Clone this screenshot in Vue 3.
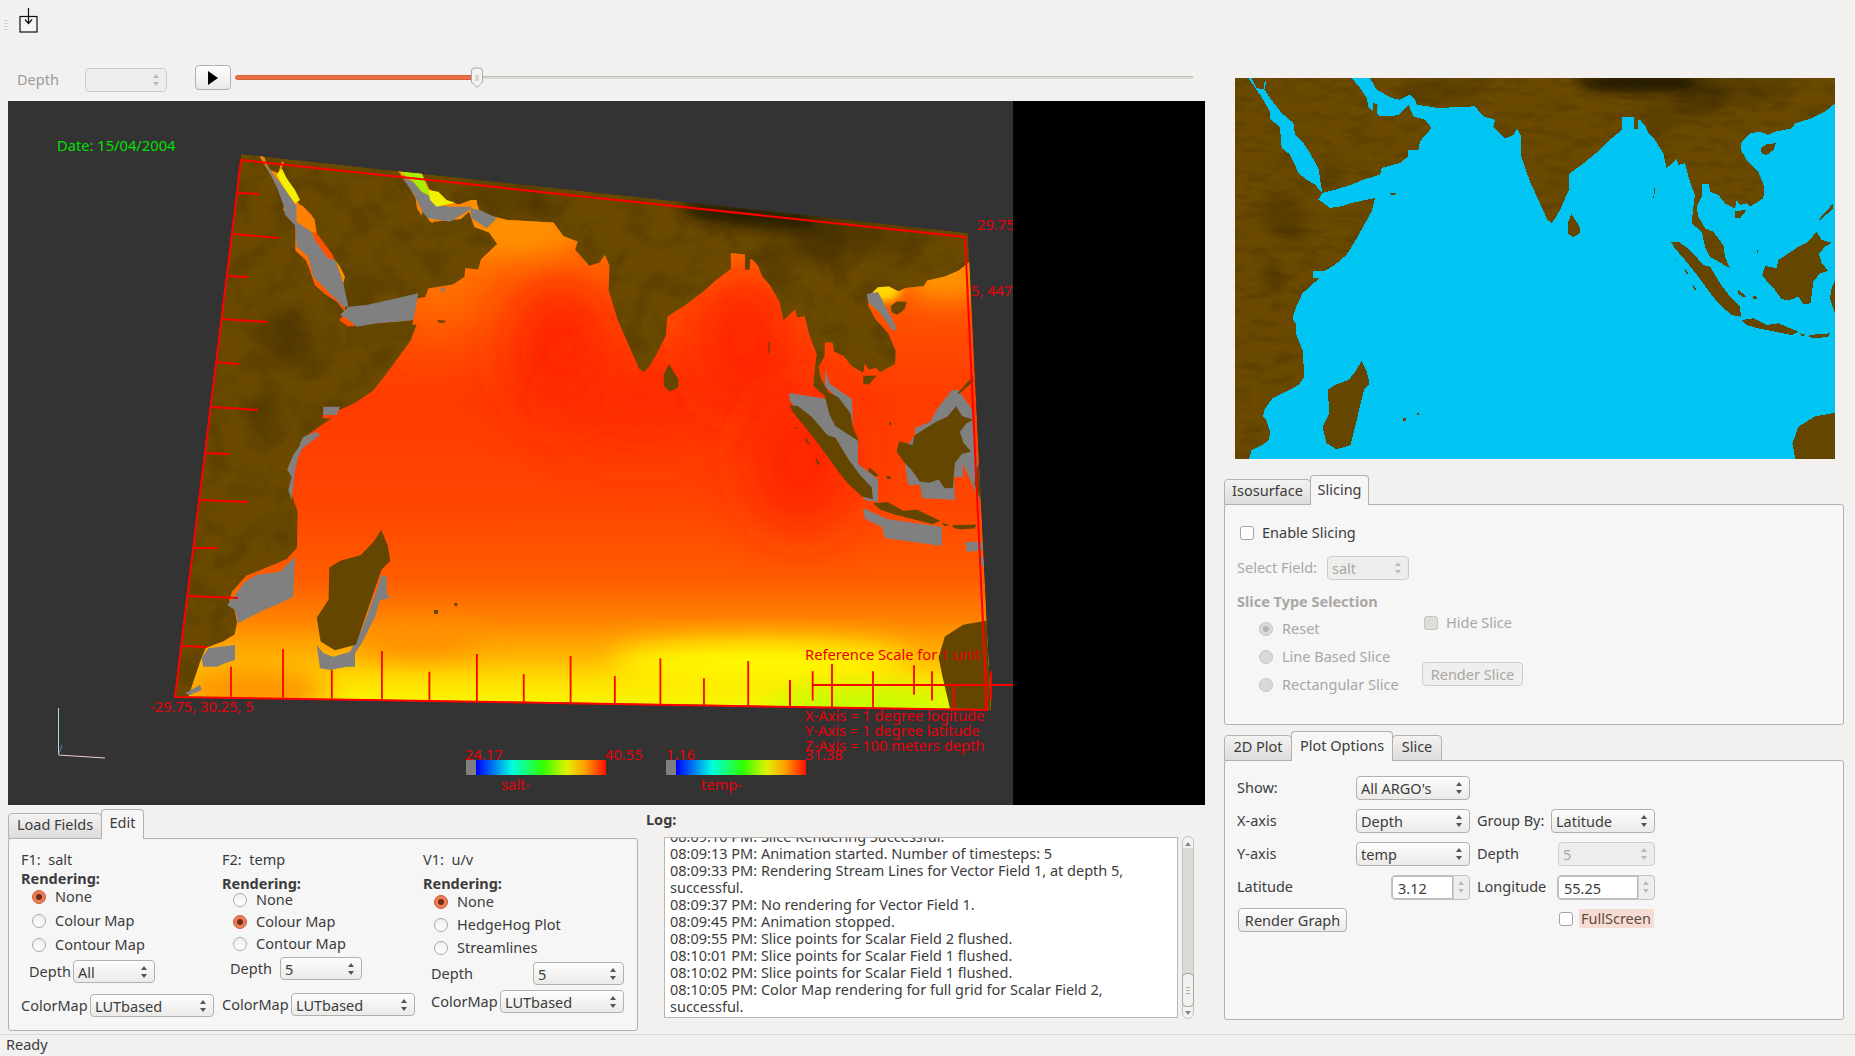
<script setup>
const parse = s => s.trim().split(/\s+/).map(p => p.split(",").map(Number))
const cv = (s, k, ox, oy, ky = k) => parse(s).map(([x, y]) => `${(ox + x * k).toFixed(1)},${(oy + y * ky).toFixed(1)}`).join(" ")
// tracing helpers: map crops -> map coordinates, scene crops -> scene coordinates
const A = s => cv(s, .83, 37, 24, 1)
const B = s => cv(s, .83, 1033, 90, 1)
const C3 = s => cv(s, 1 / 3, 180, 150)
const C4 = s => cv(s, 1 / 3, 170, 440)

const sea = [
  "60,1240 72,1167 78,1140 105,1125 122,1110 124,1085 115,1050 107,1040 110,1020 130,985 155,970 195,945 210,920 205,840 188,790 190,765 180,745 188,715 205,670 232,640 248,624",
  A("235,600 235,580 270,578 300,560 335,530 360,490 385,445 410,400 420,360 350,375 320,385 285,390 265,375 250,365 262,345 240,320 215,305 190,285 175,250 165,230 140,210 135,150 105,120 105,100 75,50 40,0 50,0 65,30 85,35 90,8 95,8 88,35 105,60 140,105 175,135 180,170 205,195 225,225 250,270 262,345 300,335 350,320 385,305 435,290 440,270 495,255 520,235 520,215 550,215 555,190 590,150 570,125 535,115 520,80 490,112 435,115 425,105 428,80 415,75 412,100 400,85 395,60 375,30 350,0 405,0 425,35 470,60 495,65 525,50 540,65 545,80 610,90 720,85 745,115 780,125"),
  "680,170 710,205 730,195 740,175 750,200 750,260 770,330 800,410 815,450 825,458 835,445 850,410 868,360 870,310 905,280 940,245 970,210 1000,180 1000,140 1030,140 1030,178 1040,178",
  B("10,60 15,60 30,75 40,100 60,120 85,160 95,205 105,195 125,175 130,195 150,190 160,230 170,260 180,285 175,320 170,370 200,395 210,440 225,470 285,505 270,470 265,435 235,395 210,385 190,350 185,320 200,290 202,252 222,252 225,275 250,285 270,310 300,325 305,300 315,315 335,310 345,320 385,295 388,260 370,215 335,180 318,150 320,125 345,100 375,95 400,105 420,95 470,85 480,70 530,55 570,35 600,10 600,0"),
  "1531,1240"
].join(" ")
const islands = [
  "875,432 895,470 895,490 878,502 866,490 865,460",
  "352,872 365,905 372,940 358,960 350,1000 325,1125 290,1138 265,1120 255,1070 272,1030 268,960 285,945 320,930 340,900",
  B("378,145 395,132 422,130 415,150 395,165 380,160"),
  B("108,425 130,425 165,450 205,495 225,500 255,550 285,590 315,620 318,650 290,645 255,615 230,585 190,530 150,480 120,445"),
  B("318,660 355,655 395,675 430,670 490,695 470,705 420,695 370,685 335,675"),
  B("495,700 515,705 500,708"),
  B("520,705 585,700 580,710 540,715 525,712"),
  B("545,395 560,420 590,428 570,440 552,462 560,490 580,512 555,520 535,545 527,610 505,612 490,590 465,600 440,598 420,570 400,550 382,525 390,498 425,505 430,480 490,440 520,425"),
  B("600,540 590,565 585,595 600,640"),
  B("595,310 550,360 555,361 595,325"),
  B("300,333 335,330 315,355 300,355"),
  B("150,505 160,520 155,522 148,510"),
  B("175,555 185,570 180,572 173,560"),
  B("118,478 130,483 126,485"),
  B("310,570 335,590 325,592 308,580"),
  B("355,588 365,590 365,597 355,597"),
  B("365,450 370,450 370,458 365,458"),
  B("57,265 61,265 57,295 55,295"),
  "1531,1028 1480,1040 1440,1070 1425,1120 1432,1167 1445,1240 1531,1240",
  A("465,345 485,345 480,351 468,351"),
  "454,1045 462,1045 462,1054 456,1054",
  "490,1028 495,1028 495,1035 490,1035"
]
const peninsula = B("170,345 185,345 210,385 235,395 265,435 270,470 285,505 225,470 210,440 200,395")
const darks = [
  [1040,38,150,32,.85],[1190,80,70,65,.3],[1300,60,120,45,.2],[150,430,50,60,.22],[185,490,40,30,.2],
  [130,620,24,50,.25],[550,60,100,35,.18],[1090,150,40,60,.18],[275,310,25,45,.18],[310,1060,18,50,.12]
]
const homography = (p0, p1, p2, p3) => {
  const dx1 = p1[0]-p2[0], dx2 = p3[0]-p2[0], dx3 = p0[0]-p1[0]+p2[0]-p3[0]
  const dy1 = p1[1]-p2[1], dy2 = p3[1]-p2[1], dy3 = p0[1]-p1[1]+p2[1]-p3[1]
  const den = dx1*dy2-dx2*dy1
  const g = (dx3*dy2-dx2*dy3)/den, h = (dx1*dy3-dx3*dy1)/den
  const a = p1[0]-p0[0]+g*p1[0], b = p3[0]-p0[0]+h*p3[0]
  const d = p1[1]-p0[1]+g*p1[1], e = p3[1]-p0[1]+h*p3[1]
  return ([x, y]) => {
    const u = (x-37)/1494
    let v = (y-24)/1143
    v -= Math.max(0, v-.25)*.08 // the 3D view shows more of the south than the flat map
    const w = g*u+h*v+1
    return [((a*u+b*v+p0[0])/w).toFixed(1), ((d*u+e*v+p0[1])/w).toFixed(1)]
  }
}
const H = homography([241,154],[968,233],[991,710],[174,697])
const warp = s => parse(s).map(H).map(p => p.join(",")).join(" ")
const ell = ([cx,cy,rx,ry]) => Array.from({length:28},(_,i)=>{const t=i/28*Math.PI*2;return `${(cx+rx*Math.cos(t)).toFixed(0)},${(cy+ry*Math.sin(t)).toFixed(0)}`}).join(" ")
const darkShapes = darks.map(d => ({ pts: ell(d), w: warp(ell(d)), op: d[4] }))
const seaW = warp(sea)
const islandsW = [...islands, peninsula].map(warp)
const quad = "241,154 968,233 991,710 174,697"

const heat = [
  [560,350,50,70,"#ff2200"],[640,400,80,45,"#ff2c00"],[745,340,50,70,"#ff2400"],[800,460,50,70,"#ff2000"],
  [505,235,70,20,"#ff9400"],[440,280,45,40,"#ff7a00"],
  [945,278,40,22,"#ff9a00"],[883,290,18,12,"#ffd800"],[250,690,80,24,"#ff9000"],[420,640,60,14,"#ff8c00"],
  [760,662,150,20,"#ffff00"],[860,704,90,14,"#b4ff00"],[960,700,30,12,"#d4ff00"]
]
const landPatches = [C3("500,530 590,520 700,510 690,570 500,590"), C3("760,215 870,205 880,240 760,260")]
const gray = [
  C3("245,20 265,60 290,110 312,170 315,195 345,225 350,290 385,320 400,380 420,400 460,440 490,470 505,470 490,400 480,370 465,330 445,325 405,270 395,245 350,215 350,170 310,110 285,80 255,35"),
  C3("480,495 505,470 560,465 650,445 715,430 700,510 650,515 590,520 530,530 500,505"),
  C3("665,80 700,130 715,160 730,190 745,205 810,215 860,185 870,175 875,205 920,235 950,205 900,180 870,170 810,170 770,165 745,135 725,125 700,95"),
  C3("430,770 480,770 470,795 430,795"),
  C3("370,860 410,845 420,855 380,885 360,900 360,880"),
  C3("780,412 795,418 798,426 785,422"),
  C4("400,0 410,0 385,50 375,90 365,180 355,150 365,110 352,90 370,45"),
  C4("375,350 370,470 330,490 270,515 205,550 195,510 172,495 225,425 260,405 330,395"),
  C4("195,615 195,660 165,670 140,680 100,680 95,655 115,625"),
  C4("635,405 650,410 650,460 660,475 630,480 615,530 595,570 575,610 555,640 555,680 530,680 480,690 450,685 440,615 460,640 490,650 540,635 575,570 620,450"),
  C4("45,760 90,735 95,750 60,765"),
  "867,294 878,292 893,321 897,329 893,331 880,313 868,302",
  "789,393 828,399 832,418 858,439 858,464 878,479 878,502 865,500 857,489 840,472 817,435 790,401",
  "825,369 830,384 852,399 853,426 840,401 825,386",
  "863,508 887,519 942,527 942,546 885,538 882,527 865,519",
  "915,428 930,422 937,409 952,390 958,390 972,409 977,460 980,502 963,464 963,477 954,477 955,500 922,498 920,485 908,485 905,464 902,453 915,435",
  "965,542 982,542 983,550 967,552",
  "978,557 983,557 984,566 980,566"
]
const paint = [
  [C3("290,75 305,55 320,85 345,120 360,150 345,160 310,110"), "#f4f000"],
  [C3("350,170 365,165 395,195 405,215 410,250 395,245 350,215"), "#ff8000"],
  [C3("395,245 410,250 440,290 455,310 465,330 445,325 405,270"), "#ff5000"],
  [C3("465,330 480,350 495,380 490,400 480,370"), "#ff9000"],
  [C3("660,65 725,70 745,120 760,125 770,160 745,135 725,125 700,95"), "#a8f000"],
  [C3("745,120 775,125 800,150 825,158 770,170 750,150"), "#f0f000"],
  [C3("870,150 890,150 895,180 875,175"), "#ff9000"]
]
const leftTicks = [[237,193,259,194],[234,234,279,238],[227,276,248,277],[222,319,268,322],[216,362,239,364],[211,407,258,410],[205,453,229,454],[199,500,248,502],[193,548,217,548],[188,596,238,598],[181,646,207,647]]
const bottomTicks = [[355,200,290],[435,148,293],[510,210,296],[587,153,298],[660,215,300],[733,162,304],[805,222,307],[877,168,310],[945,228,312],[1015,175,314],[1082,235,317],[1150,183,320],[1214,240,322]]
  .map(([x,a,b])=>({x:x/1.537,y1:600+a/3,y2:600+b/3}))
const scaleTicks = [[188,1262,1332],[246,1245,1350],[369,1262,1350],[492,1248,1318],[546,1262,1332],[612,1295,1350],[708,1262,1350],[723,1262,1332],[120,1285,1346]]
  .map(([x,a,b])=>({x:750+x/3,y1:140+a/2.376,y2:140+b/2.376}))
const log = [
  "08:09:10 PM: Slice Rendering Successful.",
  "08:09:13 PM: Animation started. Number of timesteps: 5",
  "08:09:33 PM: Rendering Stream Lines for Vector Field 1, at depth 5,",
  "successful.",
  "08:09:37 PM: No rendering for Vector Field 1.",
  "08:09:45 PM: Animation stopped.",
  "08:09:55 PM: Slice points for Scalar Field 2 flushed.",
  "08:10:01 PM: Slice points for Scalar Field 1 flushed.",
  "08:10:02 PM: Slice points for Scalar Field 1 flushed.",
  "08:10:05 PM: Color Map rendering for full grid for Scalar Field 2,",
  "successful."
]
</script>

<template>
  <div class="app">
    <div class="toolbar">
      <span class="grip"></span>
      <svg class="save" width="20" height="26" viewBox="0 0 20 26">
        <rect x="1" y="8.5" width="17" height="15.5" fill="#f6f6f5" stroke="#111" stroke-width="1.2"/>
        <path d="M9.5 0V15.500M6 11.500l3.500 4 3.500-4" fill="none" stroke="#111" stroke-width="1.2"/>
      </svg>
    </div>

    <div class="content">
      <div class="left">
        <div class="depthrow">
          <span class="depthlabel">Depth</span>
          <div class="ctl spin-sm disabled depthspin"><i class="arrows"></i></div>
          <button class="play"><svg width="12" height="14" viewBox="0 0 12 14"><path d="M1 0L11 7L1 14Z" fill="#000"/></svg></button>
          <div class="slider">
            <div class="fill"></div>
            <div class="rest"></div>
            <svg class="knob" width="14" height="22" viewBox="0 0 14 22"><path d="M1.5 4a3 3 0 0 1 3-3h5a3 3 0 0 1 3 3v11l-5.500 5.500L1.500 15Z" fill="#f3f2f1" stroke="#a9a7a4"/><path d="M5 9h4M5 11h4M5 13h4" stroke="#bbb"/></svg>
          </div>
        </div>

        <div class="gl">
          <svg class="scene" viewBox="8 101 1005 704" width="1005" height="704">
            <defs>
              <filter id="b8" x="-30%" y="-30%" width="160%" height="160%"><feGaussianBlur stdDeviation="7"/></filter>
              <filter id="b16" x="-60%" y="-60%" width="220%" height="220%"><feGaussianBlur stdDeviation="14"/></filter>
              <filter id="b28" x="-80%" y="-80%" width="260%" height="260%"><feGaussianBlur stdDeviation="30"/></filter>
              <filter id="b5" x="-50%" y="-50%" width="200%" height="200%"><feGaussianBlur stdDeviation="4"/></filter>
              <filter id="noise" x="0" y="0" width="100%" height="100%" color-interpolation-filters="sRGB">
                <feTurbulence type="fractalNoise" baseFrequency=".04" numOctaves="4" seed="7"/>
                <feColorMatrix type="matrix" values="0 0 0 0 .12  0 0 0 0 .08  0 0 0 0 0  3.500 0 0 0 -1.550"/>
              </filter>
              <clipPath id="quadClip"><polygon :points="quad"/></clipPath>
              <clipPath id="seaClip"><polygon :points="seaW"/></clipPath>
              <linearGradient id="heatGrad" gradientUnits="userSpaceOnUse" x1="0" y1="154" x2="0" y2="712">
                <stop offset="0" stop-color="#ff8a00"/>
                <stop offset=".12" stop-color="#ff8400"/>
                <stop offset=".26" stop-color="#ff5400"/>
                <stop offset=".44" stop-color="#ff3c00"/>
                <stop offset=".62" stop-color="#ff4400"/>
                <stop offset=".76" stop-color="#ff5c00"/>
                <stop offset=".83" stop-color="#ff8000"/>
                <stop offset=".89" stop-color="#ffac00"/>
                <stop offset=".945" stop-color="#ffe000"/>
                <stop offset="1" stop-color="#f4ff00"/>
              </linearGradient>
              <linearGradient id="bar" x1="0" x2="1" y1="0" y2="0">
                <stop offset="0" stop-color="#808080"/><stop offset=".07" stop-color="#808080"/>
                <stop offset=".075" stop-color="#0000ff"/><stop offset=".33" stop-color="#00ffe0"/>
                <stop offset=".55" stop-color="#30ff00"/><stop offset=".72" stop-color="#e0f000"/>
                <stop offset=".85" stop-color="#ffa000"/><stop offset="1" stop-color="#ff1000"/>
              </linearGradient>
            </defs>
            <g clip-path="url(#quadClip)">
              <polygon :points="quad" fill="#6b4a00"/>
              <rect x="170" y="150" width="825" height="565" filter="url(#noise)" opacity=".14"/>
              <polygon v-for="(d,i) in darkShapes" :key="i" :points="d.w" fill="#1e1400" :opacity="d.op" filter="url(#b8)"/>
              <g clip-path="url(#seaClip)">
                <rect x="150" y="150" width="860" height="570" fill="url(#heatGrad)"/>
                <ellipse v-for="(h,i) in heat" :key="i" :cx="h[0]" :cy="h[1]" :rx="h[2]" :ry="h[3]" :fill="h[4]" :filter="h[2] < 30 ? 'url(#b5)' : h[3] >= 40 ? 'url(#b28)' : 'url(#b16)'"/>
              </g>
              <polygon v-for="(p,i) in landPatches" :key="i" :points="p" fill="#654600"/>
              <polygon v-for="(g,i) in gray" :key="i" :points="g" fill="#808080"/>
              <polygon v-for="(p,i) in paint" :key="i" :points="p[0]" :fill="p[1]"/>
              <polygon v-for="(p,i) in islandsW" :key="i" :points="p" fill="#654600"/>
            </g>
            <g stroke="#ff0000" fill="none">
              <path d="M241 160L175 697L987 710L965 237Z" stroke-width="2"/>
              <line v-for="(t,i) in leftTicks" :key="i" :x1="t[0]" :y1="t[1]" :x2="t[2]" :y2="t[3]" stroke-width="2"/>
              <line v-for="(t,i) in bottomTicks" :key="'b'+i" :x1="t.x" :y1="t.y1" :x2="t.x" :y2="t.y2" stroke-width="1.800"/>
              <line v-for="(t,i) in scaleTicks" :key="'s'+i" :x1="t.x" :y1="t.y1" :x2="t.x" :y2="t.y2" stroke-width="1.800"/>
              <line x1="813" y1="685" x2="1013" y2="685" stroke-width="2"/>
            </g>
            <path d="M58.500 708V755" stroke="#9fe8b0" fill="none"/>
            <path d="M58.500 755L105 758" stroke="#f0c8c8" fill="none"/>
            <path d="M58.500 755L62 745" stroke="#7070c0" fill="none"/>
            <rect x="466" y="760" width="140" height="15" fill="url(#bar)"/>
            <rect x="666" y="760" width="140" height="15" fill="url(#bar)"/>
            <g class="gltext">
              <text x="57" y="151" class="date">Date: 15/04/2004</text>
              <text x="977" y="230">29.75</text>
              <text x="971" y="296">5, 447</text>
              <text x="805" y="660">Reference Scale for 1 unit</text>
              <text x="150" y="712">-29.75, 30.25, 5</text>
              <text x="805" y="721">X-Axis = 1 degree logitude</text>
              <text x="805" y="736">Y-Axis = 1 degree latitude</text>
              <text x="805" y="751">Z-Axis = 100 meters depth</text>
              <text x="805" y="760">31.38</text>
              <text x="465" y="760">24.17</text>
              <text x="605" y="760">40.55</text>
              <text x="666" y="760">1.16</text>
              <text x="501" y="790">salt-</text>
              <text x="701" y="790">temp-</text>
            </g>
          </svg>
          <div class="black"></div>
        </div>

        <div class="bottom">
          <div class="tabwrap edit">
            <div class="tabs">
              <div class="tab load">Load Fields</div>
              <div class="tab on">Edit</div>
            </div>
            <div class="pane editpane">
              <div class="col">
                <div class="fname">F1:&nbsp; salt</div>
                <b class="rendering r1">Rendering:</b>
                <label class="radio first"><i class="dot sel"></i>None</label>
                <label class="radio g6"><i class="dot"></i>Colour Map</label>
                <label class="radio g6"><i class="dot"></i>Contour Map</label>
                <div class="frow d1"><span>Depth</span><div class="ctl">All<i class="arrows"></i></div></div>
                <div class="frow c1"><span>ColorMap</span><div class="ctl">LUTbased<i class="arrows"></i></div></div>
              </div>
              <div class="col">
                <div class="fname">F2:&nbsp; temp</div>
                <b class="rendering r2">Rendering:</b>
                <label class="radio"><i class="dot"></i>None</label>
                <label class="radio g4"><i class="dot sel"></i>Colour Map</label>
                <label class="radio g4"><i class="dot"></i>Contour Map</label>
                <div class="frow d2"><span>Depth</span><div class="ctl">5<i class="arrows"></i></div></div>
                <div class="frow c2"><span>ColorMap</span><div class="ctl">LUTbased<i class="arrows"></i></div></div>
              </div>
              <div class="col">
                <div class="fname">V1:&nbsp; u/v</div>
                <b class="rendering r2">Rendering:</b>
                <label class="radio third"><i class="dot sel"></i>None</label>
                <label class="radio g5"><i class="dot"></i>HedgeHog Plot</label>
                <label class="radio g5"><i class="dot"></i>Streamlines</label>
                <div class="frow d3"><span>Depth</span><div class="ctl">5<i class="arrows"></i></div></div>
                <div class="frow c3"><span>ColorMap</span><div class="ctl">LUTbased<i class="arrows"></i></div></div>
              </div>
            </div>
          </div>
          <div class="logcol">
            <b class="loglabel">Log:</b>
            <div class="logrow">
              <div class="logbox">
                <div class="loginner">
                  <div v-for="(l,i) in log" :key="i">{{ l }}</div>
                </div>
              </div>
              <div class="scroll">
                <i class="up"></i>
                <div class="track"><div class="thumb"><span></span></div></div>
                <i class="down"></i>
              </div>
            </div>
          </div>
        </div>
      </div>

      <div class="right">
        <svg class="map" viewBox="37 24 1494 1143" preserveAspectRatio="none" width="600" height="381">
          <defs>
            <filter id="mb" x="-30%" y="-30%" width="160%" height="160%"><feGaussianBlur stdDeviation="14"/></filter>
            <filter id="mnoise" x="0" y="0" width="100%" height="100%" color-interpolation-filters="sRGB">
              <feTurbulence type="fractalNoise" baseFrequency=".016 .04" numOctaves="4" seed="7"/>
              <feColorMatrix type="matrix" values="0 0 0 0 .12  0 0 0 0 .08  0 0 0 0 0  3.500 0 0 0 -1.550"/>
            </filter>
          </defs>
          <rect x="37" y="24" width="1494" height="1143" fill="#6b4a00"/>
          <rect x="37" y="24" width="1494" height="1143" filter="url(#mnoise)" opacity=".14"/>
          <polygon v-for="(d,i) in darkShapes" :key="i" :points="d.pts" fill="#1e1400" :opacity="d.op" filter="url(#mb)"/>
          <polygon :points="sea" fill="#00c5f3" shape-rendering="crispEdges"/>
          <polygon v-for="(p,i) in islands" :key="i" :points="p" fill="#654600" shape-rendering="crispEdges"/>
        </svg>

        <div class="tabwrap slicing">
          <div class="tabs">
            <div class="tab iso">Isosurface</div>
            <div class="tab on">Slicing</div>
          </div>
          <div class="pane slicepane">
            <label class="check enable"><i class="box"></i>Enable Slicing</label>
            <div class="selrow muted"><span>Select Field:</span><div class="ctl disabled">salt<i class="arrows"></i></div></div>
            <b class="stype muted">Slice Type Selection</b>
            <div class="slicecols muted">
              <div class="slradios">
                <label class="radio"><i class="dot off on2"></i>Reset</label>
                <label class="radio"><i class="dot off"></i>Line Based Slice</label>
                <label class="radio"><i class="dot off"></i>Rectangular Slice</label>
              </div>
              <div class="slright">
                <label class="check"><i class="box off"></i>Hide Slice</label>
                <button class="btn disabledbtn">Render Slice</button>
              </div>
            </div>
          </div>
        </div>

        <div class="tabwrap plot">
          <div class="tabs">
            <div class="tab p2d">2D Plot</div>
            <div class="tab on">Plot Options</div>
            <div class="tab pslice">Slice</div>
          </div>
          <div class="pane plotpane">
            <div class="prow"><span class="l1">Show:</span><div class="ctl w1">All ARGO's<i class="arrows"></i></div></div>
            <div class="prow"><span class="l1">X-axis</span><div class="ctl w1">Depth<i class="arrows"></i></div><span class="l2 gb">Group By:</span><div class="ctl w2">Latitude<i class="arrows"></i></div></div>
            <div class="prow"><span class="l1">Y-axis</span><div class="ctl w1">temp<i class="arrows"></i></div><span class="l2 dp">Depth</span><div class="ctl w3 disabled">5<i class="arrows"></i></div></div>
            <div class="prow"><span class="l1 lat">Latitude</span><div class="num w4"><span>3.12</span><i class="arrows"></i></div><span class="l2 lo">Longitude</span><div class="num w5"><span>55.25</span><i class="arrows"></i></div></div>
            <div class="prow lastrow"><button class="btn render">Render Graph</button><label class="check fs"><i class="box"></i><span class="hl">FullScreen</span></label></div>
          </div>
        </div>
      </div>
    </div>

    <div class="status">Ready</div>
  </div>
</template>

<style>
html, body { margin: 0; background: #f2f1f0; }
</style>

<style scoped>
.app { width: 1855px; height: 1056px; background: #f2f1f0; overflow: hidden; display: flex; flex-direction: column; font: 14.5px/18px "Noto Sans", "Open Sans", sans-serif; color: #3c3c3c; }
.toolbar { height: 65px; flex: none; position: relative; box-sizing: border-box; padding: 8px 0 0 19px; }
.grip { position: absolute; left: 4px; top: 20px; width: 4px; height: 10px; background: repeating-linear-gradient(#d4d2cf 0 1px, transparent 1px 3px); }
.save { display: block; }
.content { flex: 1; display: flex; min-height: 0; }
.left { width: 1224px; flex: none; box-sizing: border-box; padding-left: 8px; }
.depthrow { display: flex; height: 27px; align-items: flex-start; }
.depthlabel { color: #9c9a98; margin: 5px 0 0 9px; width: 68px; }
.ctl { box-sizing: border-box; height: 24px; border: 1px solid #b3b1ae; border-radius: 4px; background: linear-gradient(#fdfdfd, #ebeae8); padding: 2px 0 0 4px; position: relative; line-height: 18px; flex: none; }
.ctl.disabled { background: #eeedeb; border-color: #cfcdca; color: #a9a7a5; }
.depthspin { width: 82px; margin-top: 3px; }
.arrows { position: absolute; right: 5px; top: 50%; width: 8px; height: 14px; margin-top: -7px; }
.arrows::before, .arrows::after { content: ""; position: absolute; left: 0; border: 3.500px solid transparent; }
.arrows::before { top: -2px; border-bottom: 4px solid #555; }
.arrows::after { bottom: -2px; border-top: 4px solid #555; }
.disabled .arrows::before { border-bottom-color: #bdbbb8; }
.disabled .arrows::after { border-top-color: #bdbbb8; }
.play { box-sizing: border-box; width: 36px; height: 25px; margin: 0 0 0 28px; border: 1px solid #b3b1ae; border-radius: 4px; background: linear-gradient(#fdfdfd, #ebeae8); display: flex; align-items: center; justify-content: center; padding: 0; }
.slider { position: relative; display: flex; margin: 10px 0 0 4px; width: 958px; height: 5px; }
.fill { width: 242px; height: 5px; box-sizing: border-box; border-radius: 3px 0 0 3px; background: #ea6f46; border: 1px solid #d4633c; }
.rest { flex: 1; height: 3px; margin-top: 1px; background: #dcdad7; border-top: 1px solid #bfbdba; box-sizing: border-box; }
.knob { position: absolute; left: 235px; top: -8px; }
.gl { margin-top: 9px; width: 1197px; height: 704px; display: flex; background: #333; }
.scene { flex: none; display: block; background: #333; overflow: hidden; }
.black { flex: 1; background: #000; }
.gltext text { fill: #e8000c; font-size: 14.700px; font-family: "Noto Sans", sans-serif; }
.gltext .date { fill: #00e000; }

.bottom { display: flex; margin-top: 4px; }
.tabs { display: flex; align-items: flex-end; height: 30px; position: relative; z-index: 1; margin-bottom: -1px; }
.tab { box-sizing: border-box; height: 26px; padding-top: 1px; text-align: center; border: 1px solid #b3b1ae; border-bottom: 1px solid #b3b1ae; border-radius: 4px 4px 0 0; background: linear-gradient(#f4f3f2, #dedcda); }
.tab.on { height: 30px; padding-top: 3px; background: #f6f6f6; border-bottom: 0; }
.right .tab.on { padding-top: 4px; }
.pane { box-sizing: border-box; background: #f6f6f6; border: 1px solid #b3b1ae; border-radius: 3px; }
.load { width: 94px; } .edit .on { width: 43px; margin-left: -1px; }
.edit { width: 630px; flex: none; }
.editpane { height: 193px; padding: 12px 12px 0; display: grid; grid-template-columns: 201px 201px 201px; }
.col { display: flex; flex-direction: column; align-items: flex-start; }
.fname { height: 18px; line-height: 16px; }
.rendering { display: block; font-weight: 700; height: 18px; line-height: 16px; }
.r1 { margin-top: 1px; }
.r2 { margin-top: 7px; height: 16px; line-height: 14px; }
.radio { display: flex; align-items: flex-start; height: 18px; line-height: 16px; margin-left: 11px; }
.dot { box-sizing: border-box; width: 14px; height: 14px; margin-top: 2px; border-radius: 50%; border: 1px solid #aaa8a5; background: linear-gradient(#f0efee, #fff); margin-right: 9px; flex: none; display: inline-block; position: relative; }
.dot.sel { background: #ee7d55; border-color: #c95d37; }
.dot.sel::after { content: ""; position: absolute; left: 3px; top: 3px; width: 6px; height: 6px; border-radius: 50%; background: #6e2e17; }
.dot.off { background: #dbd9d6; border-color: #c6c4c1; }
.dot.on2::after { content: ""; position: absolute; left: 3px; top: 3px; width: 6px; height: 6px; border-radius: 50%; background: #b5b3b0; }
.g6 { margin-top: 6px; } .g5 { margin-top: 5px; } .g4 { margin-top: 4px; }
.third { margin-top: 1px; }
.r2 + .radio:not(.third) { margin-top: -1px; }
.frow { display: flex; align-items: center; height: 23px; }
.frow .ctl { height: 23px; }
.frow span { margin-top: -2px; }
.d1 { margin: 6px 0 0 8px; } .d1 span { width: 44px; } .d1 .ctl { width: 82px; }
.c1, .c2 { margin-top: 11px; } .c1 span, .c2 span { width: 69px; } .c1 .ctl, .c2 .ctl { width: 124px; }
.c2 { margin-top: 13px; }
.d2 { margin: 4px 0 0 8px; } .d2 span { width: 50px; } .d2 .ctl { width: 82px; }
.d3 { margin: 5px 0 0 8px; } .d3 span { width: 102px; } .d3 .ctl { width: 91px; }
.c3 { margin: 5px 0 0 8px; } .c3 span { width: 69px; } .c3 .ctl { width: 124px; }
.logcol { margin-left: 8px; width: 549px; }
.loglabel { display: block; height: 28px; line-height: 20px; font-weight: 700; }
.logrow { display: flex; margin-left: 18px; }
.logbox { box-sizing: border-box; width: 514px; height: 181px; background: #fff; border: 1px solid #b9b7b4; overflow: hidden; padding-left: 5px; }
.loginner { margin-top: -10px; line-height: 17px; }
.scroll { width: 12px; margin-left: 4px; height: 183px; margin-top: -1px; box-sizing: border-box; border: 1px solid #c4c2bf; border-radius: 6px; background: #f4f3f2; display: flex; flex-direction: column; align-items: center; }
.up, .down { width: 0; flex: none; border: 3.500px solid transparent; box-sizing: content-box; height: 0; }
.up { border-bottom: 4px solid #888; margin: 2px 0 1px; }
.down { border-top: 4px solid #888; margin: 4px 0 0; }
.track { flex: 1; width: 100%; background: #dcdad7; margin-top: 1px; position: relative; display: flex; flex-direction: column; justify-content: flex-end; }
.thumb { height: 34px; box-sizing: border-box; background: #f2f1f0; border: 1px solid #a9a7a4; border-radius: 5px; margin: 0 -1px; display: flex; align-items: center; justify-content: center; }
.thumb span { width: 4px; height: 7px; background: repeating-linear-gradient(#b0aeab 0 1px, transparent 1px 3px); }

.right { width: 620px; flex: none; }
.map { display: block; margin: 13px 0 0 11px; }
.slicing { margin-top: 16px; }
.iso { width: 87px; } .slicing .on { width: 59px; margin-left: -1px; }
.slicepane { height: 221px; padding: 21px 12px 0; }
.check { display: flex; align-items: flex-start; height: 14px; line-height: 12px; }
.box { box-sizing: border-box; width: 14px; height: 14px; border: 1px solid #a6a4a1; border-radius: 3px; background: #fff; margin-right: 8px; flex: none; }
.box.off { background: #dfddda; border-color: #c6c4c1; }
.enable { margin-left: 3px; }
.muted { color: #a9a7a5; }
.selrow { display: flex; align-items: center; margin-top: 16px; height: 24px; }
.selrow span { width: 90px; margin-top: -2px; }
.selrow .ctl { width: 82px; }
.stype { display: block; font-weight: 700; margin-top: 13px; height: 18px; line-height: 16px; }
.slicecols { display: flex; margin-top: 5px; }
.slradios { width: 185px; padding-top: 4px; display: flex; flex-direction: column; gap: 10px; box-sizing: border-box; }
.slradios .radio { margin-left: 22px; }
.slright { display: flex; flex-direction: column; align-items: flex-start; }
.slright .check { margin-left: 2px; }
.btn { box-sizing: border-box; height: 24px; border: 1px solid #b3b1ae; border-radius: 4px; background: linear-gradient(#fdfdfd, #ebeae8); font: inherit; color: #3c3c3c; padding: 0; }
.disabledbtn { width: 101px; margin-top: 32px; color: #a9a7a5; border-color: #cfcdca; background: #f0efed; }
.plot { margin-top: 6px; }
.p2d { width: 68px; } .plot .on { width: 102px; margin-left: -1px; } .pslice { width: 50px; margin-left: -1px; }
.plotpane { height: 260px; padding: 15px 12px 0; display: flex; flex-direction: column; gap: 9px; }
.prow { display: flex; align-items: center; height: 24px; }
.lastrow { margin-top: 0; }
.l1, .l2 { margin-top: -2px; }
.l1 { width: 119px; flex: none; }
.lat { width: 154px; }
.w1 { width: 114px; } .w2 { width: 104px; } .w3 { width: 97px; }
.l2 { margin-left: 7px; flex: none; }
.gb { width: 74px; } .dp { width: 81px; } .lo { width: 80px; }
.num { box-sizing: border-box; height: 25px; display: flex; border: 1px solid #c4c2bf; border-radius: 4px; position: relative; background: #efeeec; flex: none; }
.num span { box-sizing: border-box; height: 100%; background: #fff; padding: 3px 0 0 6px; border-right: 1px solid #cfcdca; margin-right: 15px; flex: 1; border-radius: 3px 0 0 3px; box-shadow: inset 0 0 0 1px #bdbbb8; }
.num .arrows { right: 3px; }
.num .arrows::before { border-bottom-color: #bdbbb8; }
.num .arrows::after { border-top-color: #bdbbb8; }
.w4 { width: 79px; } .w5 { width: 98px; }
.render { width: 109px; margin-left: 1px; }
.fs { margin: -3px 0 0 212px; height: 19px; line-height: 19px; align-items: center; }
.fs .box { margin-right: 6px; }
.hl { background: #f6dcd2; height: 19px; width: 75px; line-height: 18px; box-sizing: border-box; padding-left: 2px; color: #5d4b43; }
.status { flex: none; height: 22px; box-sizing: border-box; border-top: 1px solid #d9d8d6; padding: 0 0 0 6px; }
</style>
